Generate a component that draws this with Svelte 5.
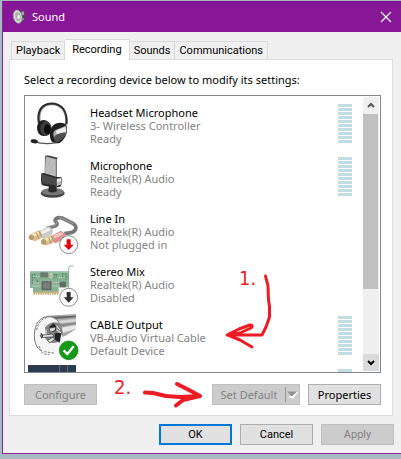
<script>
  const tabs = ['Playback', 'Recording', 'Sounds', 'Communications'];
  let selected = $state('Recording');
  const devices = [
    { icon: 'headset', name: 'Headset Microphone', driver: '3- Wireless Controller', status: 'Ready', meter: true },
    { icon: 'mic', name: 'Microphone', driver: 'Realtek(R) Audio', status: 'Ready', meter: true },
    { icon: 'line', name: 'Line In', driver: 'Realtek(R) Audio', status: 'Not plugged in', meter: false },
    { icon: 'card', name: 'Stereo Mix', driver: 'Realtek(R) Audio', status: 'Disabled', meter: false },
    { icon: 'cable', name: 'CABLE Output', driver: 'VB-Audio Virtual Cable', status: 'Default Device', meter: true },
    { icon: 'strip', name: '', driver: '', status: '', meter: true }
  ];
</script>

{#snippet downBadge(cx, cy, color)}
  <circle {cx} {cy} r="27" fill="#fff" stroke="#8c8c8c" stroke-width="3" />
  <path transform="translate({cx} {cy})" d="M-6 -16H6V0H15L0 16L-15 0H-6Z" fill={color} />
{/snippet}

{#snippet deviceIcon(kind)}
  {#if kind === 'headset'}
    <svg class="icon" viewBox="24 30 144 144" aria-hidden="true">
      <path d="M57 99C51 65 64 42 94 41C124 41 143 62 139 103" fill="none" stroke="#2b2b2b" stroke-width="7" />
      <path d="M61 92C56 68 67 46 94 44C117 44 133 58 136 80" fill="none" stroke="#777" stroke-width="2" />
      <ellipse cx="71" cy="114" rx="20" ry="24" fill="#1d1d1d" />
      <ellipse cx="78" cy="116" rx="17" ry="22" fill="#3d3d3d" />
      <ellipse cx="82" cy="118" rx="10" ry="15" fill="#0c0c0c" />
      <path d="M101 105C111 96 132 96 139 105C145 124 139 145 119 159C100 163 91 155 90 139C88 124 93 112 101 105Z" fill="#202020" />
      <path d="M105 121L137 107C142 119 139 133 130 142L106 149C98 139 98 129 105 121Z" fill="#aaa" />
      <path d="M108 122L136 111L139 124L110 134Z" fill="#eee" />
      <path d="M104 139C110 132 126 127 137 129C132 145 121 154 110 157C102 153 101 145 104 139Z" fill="#4f4f4f" />
      <path d="M41 155C59 160 79 164 107 158" fill="none" stroke="#555" stroke-width="4" />
      <ellipse cx="43" cy="154" rx="11" ry="6" fill="#222" transform="rotate(10 43 154)" />
    </svg>
  {:else if kind === 'mic'}
    <svg class="icon" viewBox="24 189 144 144" aria-hidden="true">
      <ellipse cx="98" cy="310" rx="36" ry="13" fill="#444" />
      <ellipse cx="98" cy="305" rx="34" ry="11" fill="#777" />
      <path d="M87 285H108L111 303Q98 312 85 304Z" fill="#292929" />
      <path d="M75 198L83 196L114 203L110 208L110 263L74 257Z" fill="#3d3d3d" />
      <path d="M77 199L108 207V263L74 258Z" fill="#aaa" />
      <path d="M78 203L105 210V259L76 255Z" fill="#bdbdbd" />
      <path d="M80 206L102 250M92 209L78 243M104 216L84 257" stroke="#989898" stroke-width="2" stroke-dasharray="2 3" />
      <path d="M64 251Q65 248 71 249L111 261L124 262Q128 265 126 279L121 290L103 293L67 286Q61 281 64 251Z" fill="#2b2b2b" />
      <path d="M65 253L109 265V287L66 280Z" fill="#4a4a4a" />
      <path d="M110 266L125 264V283L110 289Z" fill="#bbb" />
      <path d="M111 267L123 266V273L111 276Z" fill="#ececec" />
    </svg>
  {:else if kind === 'line'}
    <svg class="icon" viewBox="24 18 144 144" aria-hidden="true">
      <path d="M82 84C101 80 118 76 109 67C99 59 111 50 126 54L160 71C173 80 169 94 153 98L133 101" fill="none" stroke="#777" stroke-width="11" />
      <path d="M91 79C106 77 115 70 107 63M117 51L161 71" fill="none" stroke="#a0a0a0" stroke-width="3" />
      <path d="M59 92L87 79L99 91L97 103L68 117L58 105Z" fill="#c9c9c9" />
      <path d="M62 94L87 83L93 90L67 103Z" fill="#f2f2f2" />
      <path d="M31 103L57 91L65 99V114L45 124L29 117Z" fill="#d8be90" />
      <path d="M35 103L56 95V104L37 112Z" fill="#f5e6bf" />
      <path d="M49 98L56 116M57 94L65 110" stroke="#ad9165" stroke-width="3" />
      <ellipse cx="34" cy="112" rx="8" ry="8" fill="#b99b63" />
      <path d="M95 107L123 92L137 103V116L106 130L96 121Z" fill="#df8d8d" />
      <path d="M99 107L122 96L131 103L105 115Z" fill="#f1c4c2" />
      <path d="M67 118L94 105L103 115L101 128L78 137L66 130Z" fill="#d8be90" />
      <path d="M72 118L94 109V118L74 126Z" fill="#f5e6bf" />
      <path d="M86 112L93 130M94 108L102 125" stroke="#ad9165" stroke-width="3" />
      <ellipse cx="71" cy="126" rx="8" ry="8" fill="#b99b63" />
      {@render downBadge(146, 134, '#e40000')}
    </svg>
  {:else if kind === 'card'}
    <svg class="icon" viewBox="24 177 144 144" aria-hidden="true">
      <path d="M161 198H149L146 203V266" fill="none" stroke="#aaa" stroke-width="3" />
      <path d="M30 214H147V262H116V278H39V264H30Z" fill="#86b193" />
      <path d="M31 216H146M34 258H143" stroke="#accdb5" stroke-width="3" />
      <path d="M40 279H116" stroke="#c6b174" stroke-width="10" stroke-dasharray="5 2" />
      <path d="M37 222V253M44 221V238M50 243H58M103 222V238M109 222V232M128 220V234M138 220V239" stroke="#5d8469" stroke-width="4" stroke-dasharray="5 3" />
      <path d="M40 229H61M40 249H57M100 247H119M116 232H135" stroke="#d2dfce" stroke-width="3" stroke-dasharray="4 3" />
      <rect x="64" y="243" width="31" height="28" fill="#5e6762" stroke="#b0beb1" stroke-width="2" stroke-dasharray="2 2" />
      <rect x="69" y="248" width="20" height="18" fill="#77807a" />
      <rect x="61" y="217" width="23" height="15" fill="#6a7d6e" />
      <rect x="119" y="245" width="19" height="17" fill="#626b64" />
      <path d="M88 219H98V235H88Z" fill="#b8c8ad" />
      {@render downBadge(146, 292, '#303030')}
    </svg>
  {:else if kind === 'cable'}
    <svg class="icon" viewBox="24 21 144 144" aria-hidden="true">
      <path d="M80 32L168 27V72L137 92L108 102Z" fill="#aaa" />
      <path d="M91 35L168 32V37L103 42Z" fill="#666" />
      <path d="M104 48L168 42V50L108 56Z" fill="#d5d5d5" />
      <path d="M108 60L168 52V57L112 66Z" fill="#888" />
      <path d="M116 70L168 60V71L117 87Z" fill="#e9e9e9" />
      <path d="M85 35C61 34 43 57 43 91C43 121 58 147 86 151C112 151 126 122 127 91C127 55 108 34 85 35Z" fill="#f4f4f4" />
      <path d="M127 91C127 55 108 34 85 35C61 34 43 57 43 91C43 106 47 120 54 131" fill="none" stroke="#777" stroke-width="3" />
      <path d="M50 75C55 50 69 38 85 37M57 131C66 145 76 150 88 149M57 123L65 138M73 140L106 145" fill="none" stroke="#777" stroke-width="3" stroke-dasharray="7 4" />
      <path d="M75 67Q95 44 118 55L128 82L113 112Q91 119 76 102Z" fill="#858585" />
      <path d="M88 65L101 55L108 64V78L91 81ZM104 84H124L119 113L105 104Z" fill="#222" />
      <path d="M60 91L96 87L104 95L64 98ZM87 70L106 66V76L91 82ZM83 106L99 96L104 103L89 114Z" fill="#ddd" stroke="#333" stroke-width="2" />
      <path d="M62 86Q71 90 64 99" fill="none" stroke="#333" stroke-width="4" />
      <path d="M110 62L119 74M110 74L123 84M78 74V89M77 104L87 117" stroke="#f3f3f3" stroke-width="3" />
      <circle cx="146" cy="136" r="28" fill="#159a18" stroke="#087b0d" stroke-width="2" />
      <path d="M131 136L142 147L161 124" fill="none" stroke="#fff" stroke-width="7" />
    </svg>
  {:else}
    <svg class="icon" viewBox="0 0 144 144" aria-hidden="true">
      <path d="M0 0H144V144H0Z" fill="#2c3c50" />
      <path d="M95 0V144M119 0V144" stroke="#7d9195" stroke-width="2" />
    </svg>
  {/if}
{/snippet}

<main class="window">
  <header class="titlebar">
    <svg class="speaker" viewBox="0 0 42 48" aria-hidden="true">
      <path d="M22 4L35 5L39 15L37 31L29 40L19 43Z" fill="#474747" />
      <path d="M27 8L35 7L37 17L31 19ZM31 29L36 27L34 33L28 37Z" fill="#aaa" />
      <ellipse cx="17" cy="23" rx="13" ry="20" fill="#d7dddb" stroke="#8b9691" stroke-width="2" transform="rotate(-12 17 23)" />
      <ellipse cx="18" cy="23" rx="8" ry="14" fill="#aab3af" transform="rotate(-12 18 23)" />
      <ellipse cx="20" cy="24" rx="4" ry="6" fill="#eee" />
    </svg>
    <h1>Sound</h1>
    <button class="close" aria-label="Close">
      <svg viewBox="0 0 10 10" aria-hidden="true"><path d="M0 0L10 10M10 0L0 10" stroke="#fff" stroke-width="1.2" /></svg>
    </button>
  </header>

  <div class="body">
    <div class="tabs" role="tablist">
      {#each tabs as tab}
        <button class="tab" class:active={selected === tab} role="tab" aria-selected={selected === tab} onclick={() => (selected = tab)}>{tab}</button>
      {/each}
    </div>

    <section class="panel" role="tabpanel" aria-label="Recording">
      <p class="hint">Select a recording device below to modify its settings:</p>
      <div class="listbox">
        <ul>
          {#each devices as device}
            <li>
              {@render deviceIcon(device.icon)}
              <div class="info">
                <span class="name">{device.name}</span>
                <span>{device.driver}</span>
                <span>{device.status}</span>
              </div>
              {#if device.meter}<div class="meter"></div>{/if}
            </li>
          {/each}
        </ul>
        <div class="scrollbar">
          <button class="up" aria-label="Scroll up"><svg viewBox="0 0 8 7" aria-hidden="true"><path d="M1 5L4 2L7 5" /></svg></button>
          <div class="track"><div class="thumb"></div></div>
          <button class="down" aria-label="Scroll down"><svg viewBox="0 0 8 7" aria-hidden="true"><path d="M1 2L4 5L7 2" /></svg></button>
        </div>
      </div>
      <div class="actions">
        <button class="btn wide" disabled>Configure</button>
        <span class="split">
          <button class="btn main" disabled>Set Default</button>
          <button class="btn arrow" disabled aria-label="Set Default options"><svg viewBox="0 0 12 8" aria-hidden="true"><path d="M1 7L11 1V2L6 8Z" fill="#fff" /><path d="M0 1H10L5 6Z" fill="#929292" /></svg></button>
        </span>
        <button class="btn wide">Properties</button>
      </div>
    </section>

    <footer>
      <button class="btn compact default">OK</button>
      <button class="btn compact">Cancel</button>
      <button class="btn compact" disabled>Apply</button>
    </footer>
  </div>

  <span class="note one">1.</span>
  <span class="note two">2.</span>
  <svg class="ink" width="401" height="459" viewBox="0 0 401 459" aria-hidden="true">
    <path d="M265.500 276L268 286L268.500 300L269.500 306V317L266 327L262 335H227L239 329L250 325Q254 325 251 328L240 333L228 335L240 340L252 347" />
    <path d="M145 392.500L153 393L166 396L180 397L200 396M177 384L189 390L200 396L183 400L176 405.500" stroke-width="4" />
  </svg>
</main>

<style>
  :global(body) {
    background: #a9bac5;
  }
  .window {
    position: relative;
    margin: 1px 0 3px 2px;
    border: 1px solid #8b2798;
    border-top-color: #74138a;
    border-right: 0;
    background: #f0f0f0;
    font-family: "Noto Sans", "Open Sans", sans-serif;
    font-size: 11px;
    line-height: 13px;
    color: #000;
  }
  button {
    font: inherit;
    color: inherit;
    padding: 0;
    margin: 0;
    border: 0;
  }
  .titlebar {
    display: flex;
    align-items: center;
    height: 30px;
    padding: 0 10px 0 9px;
    background: #881798;
    color: #fff;
  }
  .speaker {
    width: 14px;
    height: 16px;
  }
  h1 {
    flex: 1;
    margin: 0 0 0 6px;
    font-size: 11px;
    font-weight: 400;
    line-height: 16px;
  }
  .close {
    display: flex;
    background: none;
  }
  .close svg {
    width: 10px;
    height: 10px;
    overflow: visible;
  }
  .body {
    padding: 7px 8px 8px 6px;
  }
  .tabs {
    display: flex;
    align-items: flex-end;
    padding-left: 2px;
  }
  .tab {
    height: 18px;
    padding: 0 4px;
    border: 1px solid #d9d9d9;
    border-bottom: 0;
    border-left-width: 0;
    background: #f0f0f0;
    font-family: Roboto, "Open Sans", sans-serif;
  }
  .tab:first-child {
    border-left-width: 1px;
  }
  .tab.active {
    height: 21px;
    padding: 0 7px 2px;
    margin-bottom: -1px;
    background: #fff;
    z-index: 1;
  }
  .panel {
    padding: 13px 11px 10px 14px;
    border: 1px solid #dcdcdc;
    background: #fff;
  }
  .hint {
    margin: 0 0 9px;
  }
  .listbox {
    display: flex;
    height: 276px;
    border: 1px solid #828790;
  }
  ul {
    flex: 1;
    min-width: 0;
    margin: 0;
    padding: 2px 10px 0 3px;
    list-style: none;
    overflow: hidden;
  }
  li {
    display: flex;
    height: 53px;
  }
  .icon {
    flex: none;
    width: 48px;
    height: 48px;
    margin-top: 2px;
    overflow: visible;
  }
  .info {
    flex: 1;
    display: flex;
    flex-direction: column;
    margin: 8px 0 0 14px;
    color: #838383;
    white-space: nowrap;
  }
  .name {
    color: #000;
  }
  .meter {
    width: 14px;
    height: 39px;
    margin-top: 6px;
    background: repeating-linear-gradient(#c1dce3 0 3px, #fff 3px 4px);
  }
  .scrollbar {
    display: flex;
    flex-direction: column;
    width: 16px;
    margin: 1px;
    background: #f0f0f0;
  }
  .up, .down {
    display: flex;
    align-items: center;
    justify-content: center;
    height: 17px;
    background: #f0f0f0;
  }
  .down {
    background: #dadada;
  }
  .up svg, .down svg {
    width: 8px;
    height: 7px;
    fill: none;
    stroke: #555;
    stroke-width: 2;
  }
  .down svg {
    stroke: #000;
  }
  .track {
    flex: 1;
  }
  .thumb {
    height: 73%;
    margin-right: 1px;
    background: #c0c0c0;
  }
  .actions {
    display: flex;
    gap: 8px;
    margin-top: 11px;
  }
  .btn {
    height: 21px;
    border: 1px solid #adadad;
    background: #e1e1e1;
    box-sizing: border-box;
  }
  .btn:disabled {
    border-color: #bfbfbf;
    background: #ccc;
    color: #838383;
  }
  .wide, .compact {
    width: 73px;
  }
  .split {
    display: flex;
    margin-left: auto;
  }
  .btn.main {
    width: 73px;
    border-right: 0;
  }
  .btn.arrow {
    display: flex;
    align-items: center;
    width: 15px;
    border-left: 0;
  }
  .arrow svg {
    width: 15px;
    height: 15px;
    padding-left: 1px;
    border-left: 1px solid #999;
  }
  footer {
    display: flex;
    justify-content: flex-end;
    gap: 8px;
    margin: 8px -1px 0 0;
  }
  .compact {
    font-family: Roboto, "Open Sans", sans-serif;
  }
  .btn.default {
    border: 2px solid #0078d7;
  }
  .note {
    position: absolute;
    font-family: "DejaVu Sans Condensed", "DejaVu Sans", sans-serif;
    font-size: 20px;
    line-height: 24px;
    color: #ed1c24;
  }
  .one {
    left: 236px;
    top: 264px;
  }
  .two {
    left: 111px;
    top: 373px;
  }
  .ink {
    position: absolute;
    left: -3px;
    top: -2px;
    fill: none;
    stroke: #ed1c24;
    stroke-width: 3;
    stroke-linecap: round;
    stroke-linejoin: round;
    pointer-events: none;
  }
</style>
